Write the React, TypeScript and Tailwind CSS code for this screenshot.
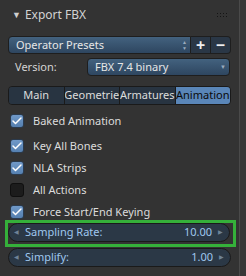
import { Check } from "lucide-react"

const font = { fontFamily: '"Noto Sans", "Open Sans", sans-serif' }

function Checkbox({ label, checked }: { label: string; checked: boolean }) {
  return (
    <div className="flex items-center h-[22px] pl-[10px]">
      <div
        className={
          checked
            ? "w-[14px] h-[14px] rounded-[3px] bg-gradient-to-b from-[#7099c8] to-[#5580b0] border border-[#2a3a4d] flex items-center justify-center"
            : "w-[14px] h-[14px] rounded-[3px] bg-[#1c1c1c] border border-[#0f0f0f]"
        }
      >
        {checked && <Check className="w-[12px] h-[12px] text-white" strokeWidth={3} />}
      </div>
      <span className="ml-[9px] text-[11px] text-[#dcdcdc]">{label}</span>
    </div>
  )
}

function NumField({ label, value }: { label: string; value: string }) {
  return (
    <div className="h-[19px] rounded-full bg-[#2b3846] border border-[#1a1a1a] flex items-center pl-[5px] pr-[6px] text-[11px] text-[#9fc7ee]">
      <span className="text-[6px] text-[#6f8397]">◀</span>
      <span className="ml-[6px]">{label}</span>
      <span className="ml-auto mr-[6px]">{value}</span>
      <span className="text-[6px] text-[#6f8397]">▶</span>
    </div>
  )
}

export default function App() {
  const tabs = ["Main", "Geometrie", "Armatures", "Animation"]
  return (
    <div className="w-[246px] h-[276px] bg-[#333333] flex overflow-hidden" style={font}>
      <div className="w-[239px] flex flex-col">
        {/* Header */}
        <div className="h-[30px] flex items-center pl-[12px] pr-[12px]">
          <span className="text-[9px] text-[#cfcfcf]">▼</span>
          <span className="ml-[4px] text-[12px] text-[#d2d2d2]">Export FBX</span>
          <div className="ml-auto grid grid-cols-4 gap-[2px]">
            {Array.from({ length: 8 }).map((_, i) => (
              <div key={i} className="w-[1px] h-[1px] bg-[#151515]" />
            ))}
          </div>
        </div>

        {/* Operator presets */}
        <div className="mt-[6px] mx-[8px] h-[18px] flex">
          <div className="flex-1 rounded-l-[4px] bg-gradient-to-b from-[#43627f] to-[#2e4660] border border-[#1e1e1e] flex items-center pl-[7px] pr-[3px] text-[11px] text-[#e6e6e6]">
            <span>Operator Presets</span>
            <span className="ml-auto flex flex-col text-[5px] leading-[6px] text-[#9aabbd]">
              <span>▲</span>
              <span>▼</span>
            </span>
          </div>
          <div className="w-[20px] bg-[#2a3746] border-y border-r border-[#1e1e1e] flex items-center justify-center text-[16px] font-bold text-[#f0f0f0] leading-none">
            +
          </div>
          <div className="w-[20px] rounded-r-[4px] bg-[#2a3746] border-y border-r border-[#1e1e1e] flex items-center justify-center text-[16px] font-bold text-[#f0f0f0] leading-none">
            −
          </div>
        </div>

        {/* Version */}
        <div className="mt-[4px] h-[18px] flex items-center">
          <span className="pl-[15px] w-[87px] text-[11px] text-[#d4d4d4]">Version:</span>
          <div className="mr-[9px] flex-1 h-[18px] rounded-[4px] bg-gradient-to-b from-[#43627f] to-[#2e4660] border border-[#1e1e1e] flex items-center pl-[7px] pr-[3px] text-[11px] text-[#e6e6e6]">
            <span>FBX 7.4 binary</span>
            <span className="ml-auto text-[6px] text-[#9aabbd]">▼</span>
          </div>
        </div>

        {/* Tabs */}
        <div className="mt-[10px] mx-[8px] h-[19px] flex rounded-[4px] border border-[#1a1a1a] overflow-hidden">
          {tabs.map((t, i) => (
            <div
              key={t}
              className={
                i === 3
                  ? "flex-1 min-w-0 bg-[#5a86b8] text-[#0a0a0a] flex items-center justify-center text-[11px] overflow-hidden whitespace-nowrap"
                  : "flex-1 min-w-0 bg-[#283441] text-[#dcdcdc] border-r border-[#1a1a1a] flex items-center justify-center text-[11px] overflow-hidden whitespace-nowrap"
              }
            >
              {t}
            </div>
          ))}
        </div>

        {/* Checkboxes */}
        <div className="mt-[5px] flex flex-col">
          <Checkbox label="Baked Animation" checked />
          <div className="h-[3px]" />
          <Checkbox label="Key All Bones" checked />
          <Checkbox label="NLA Strips" checked />
          <Checkbox label="All Actions" checked={false} />
          <Checkbox label="Force Start/End Keying" checked />
        </div>

        {/* Fields */}
        <div className="-mt-[3px] ml-[5px] w-[231px] border-[3px] border-[#35b03a] pb-[2px] pr-[3px]">
          <NumField label="Sampling Rate:" value="10.00" />
        </div>
        <div className="mt-[1px] mx-[8px]">
          <NumField label="Simplify:" value="1.00" />
        </div>
      </div>

      {/* Right strip */}
      <div className="w-[7px] h-full border-l border-[#4a4a4a] bg-[#383838]" />
    </div>
  )
}
